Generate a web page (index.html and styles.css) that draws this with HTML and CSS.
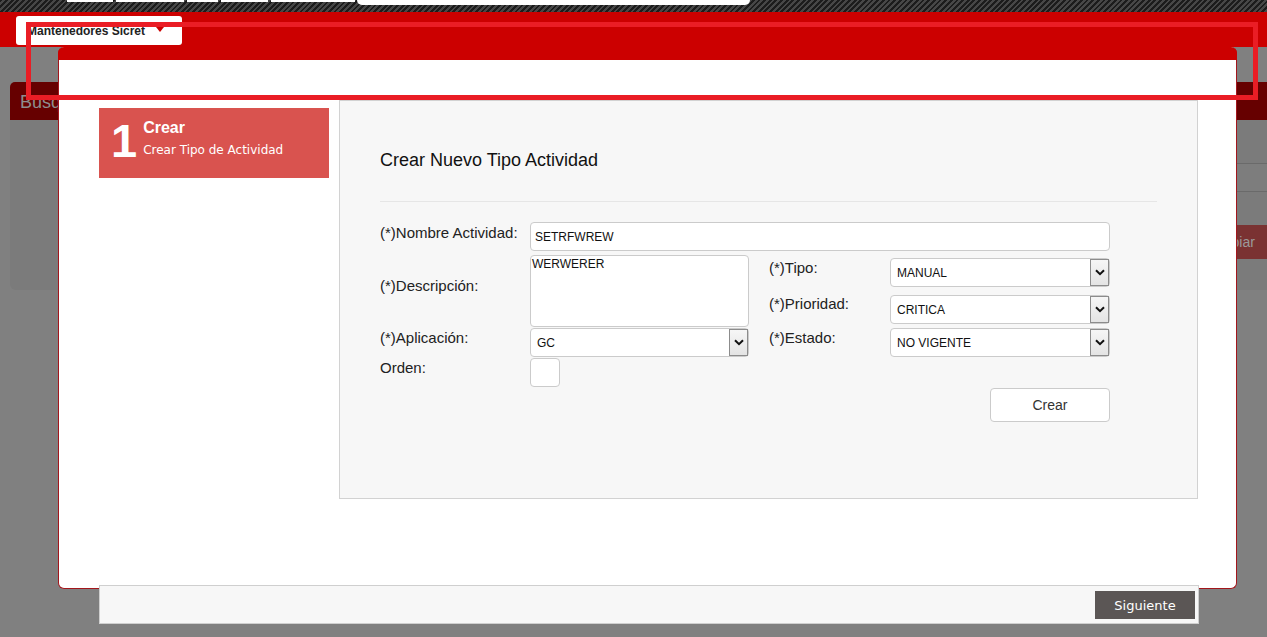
FILE: index.html
```html
<!DOCTYPE html>
<html lang="es">
<head>
<meta charset="utf-8">
<title>Crear Tipo de Actividad</title>
<link rel="stylesheet" href="styles.css">
</head>
<body>
<div class="page">
  <div class="topbar">
    <div class="tabs">
      <span class="tab w46"></span>
      <span class="tab w68"></span>
      <span class="tab w31"></span>
      <span class="tab w47"></span>
      <span class="tab w84"></span>
      <span class="tab big"></span>
    </div>
  </div>
  <div class="redbar">
    <div class="menu">Mantenedores Sicret <span class="caret"></span></div>
  </div>
  <div class="content">
    <section class="search">
      <div class="search-head">Busqueda</div>
      <div class="search-body">
        <div class="bg-field"></div>
        <div class="bg-btn-row"><span class="bg-btn">Limpiar</span></div>
      </div>
    </section>
  </div>
</div>

<div class="modal">
  <div class="modal-head"></div>
  <div class="modal-body">
    <div class="modal-row">
      <div class="steps">
        <div class="step">
          <span class="step-num">1</span>
          <div class="step-text">
            <div class="step-title">Crear</div>
            <div class="step-sub">Crear Tipo de Actividad</div>
          </div>
        </div>
      </div>
      <div class="panel">
        <h2 class="panel-title">Crear Nuevo Tipo Actividad</h2>
        <div class="divider"></div>
        <div class="form">
          <div class="lbl a-nl pt3">(*)Nombre Actividad:</div>
          <div class="inp a-ni">SETRFWREW</div>
          <div class="lbl a-dl pt23">(*)Descripción:</div>
          <div class="area a-dt">WERWERER</div>
          <div class="lbl a-tl pt5">(*)Tipo:</div>
          <div class="sel a-ts mt3"><span class="sel-text">MANUAL</span><span class="arrow"><svg width="10" height="7" viewBox="0 0 10 7"><path d="M1 1.2 L5 5.2 L9 1.2" fill="none" stroke="#111" stroke-width="2"/></svg></span></div>
          <div class="lbl a-pl pt5">(*)Prioridad:</div>
          <div class="sel a-ps mt4"><span class="sel-text">CRITICA</span><span class="arrow"><svg width="10" height="7" viewBox="0 0 10 7"><path d="M1 1.2 L5 5.2 L9 1.2" fill="none" stroke="#111" stroke-width="2"/></svg></span></div>
          <div class="lbl a-al pt2">(*)Aplicación:</div>
          <div class="sel a-as"><span class="sel-text">GC</span><span class="arrow"><svg width="10" height="7" viewBox="0 0 10 7"><path d="M1 1.2 L5 5.2 L9 1.2" fill="none" stroke="#111" stroke-width="2"/></svg></span></div>
          <div class="lbl a-el pt2">(*)Estado:</div>
          <div class="sel a-es"><span class="sel-text">NO VIGENTE</span><span class="arrow"><svg width="10" height="7" viewBox="0 0 10 7"><path d="M1 1.2 L5 5.2 L9 1.2" fill="none" stroke="#111" stroke-width="2"/></svg></span></div>
          <div class="lbl a-ol pt2">Orden:</div>
          <div class="inp small a-oi"></div>
          <div class="btn a-bt">Crear</div>
        </div>
      </div>
    </div>
    <div class="modal-foot">
      <span class="next">Siguiente</span>
    </div>
  </div>
</div>

<div class="annot"></div>
</body>
</html>
```

FILE: styles.css
```css
* { box-sizing: border-box; }

html, body {
  margin: 0;
  padding: 0;
  height: 100%;
}

body {
  background: #808080;
  font-family: "Liberation Sans", Arial, sans-serif;
  color: #222;
  overflow: hidden;
  position: relative;
}

/* ---------- background page ---------- */
.topbar {
  height: 12px;
  background: repeating-linear-gradient(135deg, #1c1c1c 0 2px, #474747 2px 4px);
  overflow: hidden;
}

.tabs {
  display: flex;
  gap: 3px;
  margin-left: 67px;
  align-items: flex-start;
}

.tab {
  display: block;
  height: 2px;
  background: #fff;
}
.w46 { width: 46px; }
.w68 { width: 68px; }
.w31 { width: 31px; }
.w47 { width: 47px; }
.w84 { width: 84px; }
.tab.big {
  width: 393px;
  height: 5px;
  border-radius: 0 0 6px 6px;
  margin-left: -1px;
}

.redbar {
  height: 35px;
  background: #cc0000;
  padding: 4px 0 0 16px;
  position: relative;
  z-index: 3;
}

.menu {
  width: 166px;
  height: 29px;
  background: #fff;
  border-radius: 3px;
  font-size: 12px;
  font-weight: bold;
  color: #222;
  display: flex;
  align-items: center;
  padding-left: 11px;
}

.caret {
  display: inline-block;
  margin-left: 11px;
  margin-top: -3px;
  width: 0;
  height: 0;
  border-left: 4px solid transparent;
  border-right: 4px solid transparent;
  border-top: 5px solid #cc0000;
}

.content {
  padding: 35px 0 0 10px;
}

.search-head {
  height: 38px;
  background: #660000;
  border-radius: 5px 0 0 0;
  color: #8e8e8e;
  font-size: 18px;
  padding: 10px 0 0 10px;
}

.search-body {
  height: 170px;
  background: #7b7b7b;
  border-radius: 0 0 0 6px;
  padding-top: 43px;
}

.bg-field {
  margin-left: 700px;
  height: 29px;
  border-top: 1px solid #6a6a6a;
  border-bottom: 1px solid #6a6a6a;
  background: #7d7d7d;
}

.bg-btn-row {
  display: flex;
  justify-content: flex-end;
  margin-top: 33px;
}

.bg-btn {
  width: 82px;
  height: 34px;
  background: #7a3232;
  color: #9a9a9a;
  font-size: 14px;
  padding: 9px 0 0 24px;
}

/* ---------- modal ---------- */
.modal {
  position: absolute;
  left: 58px;
  top: 47px;
  width: 1179px;
  background: #fff;
  border: 1px solid #a3161c;
  border-top: 0;
  border-radius: 6px;
  z-index: 5;
}

.modal-head {
  height: 13px;
  margin: 0 -1px;
  background: #cc0000;
  border-radius: 6px 6px 0 0;
}

.modal-body {
  padding: 40px 38px 0 40px;
}

.modal-row {
  display: flex;
  gap: 10px;
  align-items: flex-start;
}

.steps {
  width: 230px;
  margin-top: 8px;
}

.step {
  height: 70px;
  background: #d9534f;
  color: #fff;
  display: flex;
  align-items: flex-start;
  padding-left: 12px;
}

.step-num {
  font-size: 47px;
  font-weight: bold;
  line-height: 46px;
  margin-top: 10px;
  margin-right: 6px;
}

.step-text {
  padding-top: 11px;
}

.step-title {
  font-size: 16px;
  font-weight: bold;
  line-height: 18px;
}

.step-sub {
  font-family: "DejaVu Sans", sans-serif;
  font-size: 12px;
  line-height: 16px;
  margin-top: 5px;
}

.panel {
  width: 859px;
  height: 399px;
  background: #f7f7f7;
  border: 1px solid #d2d2d2;
  padding: 0 40px;
}

.panel-title {
  margin: 49px 0 0;
  font-size: 18px;
  font-weight: normal;
  line-height: 20px;
  color: #111;
}

.divider {
  height: 1px;
  background: #e6e6e6;
  margin-top: 31px;
}

.form {
  margin-top: 20px;
  display: grid;
  grid-template-columns: 150px 219px 20px 121px 220px;
  grid-template-rows: 33px 36px 37px 30px 30px 34px;
  grid-template-areas:
    "nl ni ni ni ni"
    "dl dt .  tl ts"
    "dl dt .  pl ps"
    "al as .  el es"
    "ol oi .  .  . "
    ".  .  .  .  bt";
  font-size: 15px;
}

.a-nl { grid-area: nl; }
.a-ni { grid-area: ni; }
.a-dl { grid-area: dl; }
.a-dt { grid-area: dt; }
.a-tl { grid-area: tl; }
.a-ts { grid-area: ts; }
.a-pl { grid-area: pl; }
.a-ps { grid-area: ps; }
.a-al { grid-area: al; }
.a-as { grid-area: as; }
.a-el { grid-area: el; }
.a-es { grid-area: es; }
.a-ol { grid-area: ol; }
.a-oi { grid-area: oi; }
.a-bt { grid-area: bt; }

.lbl {
  line-height: 16px;
  color: #222;
  align-self: start;
  white-space: nowrap;
}
.pt2 { padding-top: 2px; }
.pt3 { padding-top: 3px; }
.pt5 { padding-top: 5px; }
.pt23 { padding-top: 23px; }
.mt3 { margin-top: 3px; }
.mt4 { margin-top: 4px; }

.inp,
.sel,
.area {
  background: #fff;
  border: 1px solid #cbcbcb;
  border-radius: 4px;
  font-size: 12px;
  color: #111;
  align-self: start;
}

.inp {
  height: 29px;
  display: flex;
  align-items: center;
  padding-left: 4px;
}

.inp.small {
  width: 30px;
}

.area {
  height: 72px;
  padding: 1px 1px;
  line-height: 14px;
}

.sel {
  height: 29px;
  display: flex;
  align-items: stretch;
}

.sel-text {
  display: flex;
  align-items: center;
  padding-left: 6px;
  padding-top: 1px;
}

.arrow {
  margin-left: auto;
  width: 19px;
  background: linear-gradient(#f6f6f6, #e4e4e4);
  border: 1px solid #8c8c8c;
  display: flex;
  align-items: center;
  justify-content: center;
}

.btn {
  justify-self: end;
  width: 120px;
  height: 34px;
  background: #fff;
  border: 1px solid #cbcbcb;
  border-radius: 4px;
  color: #333;
  font-size: 14px;
  display: flex;
  align-items: center;
  justify-content: center;
}

.modal-foot {
  margin: 86px -1px -36px 0;
  height: 39px;
  background: #f7f7f7;
  border: 1px solid #cfcfcf;
  display: flex;
  justify-content: flex-end;
  padding: 5px 3px 0 0;
}

.next {
  width: 100px;
  height: 28px;
  background: #5b5655;
  color: #fff;
  font-family: "DejaVu Sans", sans-serif;
  font-size: 13px;
  display: flex;
  align-items: center;
  justify-content: center;
}

/* ---------- annotation rectangle ---------- */
.annot {
  position: absolute;
  left: 26px;
  top: 22px;
  width: 1232px;
  height: 78px;
  border: 5px solid #ea1d25;
  z-index: 10;
  pointer-events: none;
}
```
